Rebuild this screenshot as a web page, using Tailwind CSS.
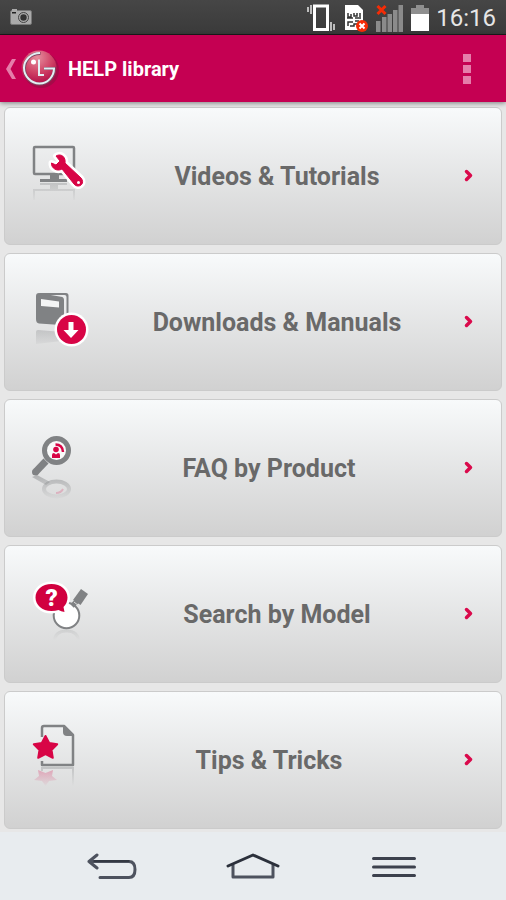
<!DOCTYPE html>
<html lang="en">
<head>
    <meta charset="UTF-8">
    <meta name="viewport" content="width=device-width, initial-scale=1.0">
    <title>HELP library</title>
    <script src="https://cdn.jsdelivr.net/npm/@tailwindcss/browser@4"></script>
</head>
<body class="min-h-screen flex flex-col bg-[#e7e7e7] font-['Roboto',sans-serif]">
    <!-- Status bar -->
    <div class="h-[35px] flex items-center justify-between pl-[10px] pr-[10px] border-b border-[#1c1c1c] bg-linear-to-b from-[#464646] to-[#3a3a3a]">
        <svg class="w-[22px] h-[16px]" viewBox="0 0 22 16" fill="none">
            <rect x="0.5" y="1.5" width="21" height="14" rx="1.5" fill="#aaa" stroke="#777"/>
            <path d="M2 0h5v2H2z" fill="#aaa"/>
            <path d="M2 3h4v1.500H2z" fill="#222"/>
            <circle cx="13.500" cy="8.500" r="5" fill="#aaa" stroke="#444" stroke-width="1"/>
            <circle cx="13.500" cy="8.500" r="3.200" fill="#333"/>
        </svg>
        <div class="flex items-center pt-px">
            <svg class="w-[28px] h-[28px]" viewBox="0 0 28 28" fill="none">
                <rect x="7.500" y="2" width="13" height="23.500" stroke="#fff" stroke-width="3"/>
                <path d="M1 3v5M4 1v9M24 18v9M27 20v6" stroke="#e8e8e8" stroke-width="1.500"/>
            </svg>
            <svg class="w-[24px] h-[28px] ml-[9px]" viewBox="0 0 24 28" fill="none">
                <path d="M1 1h13l5 5v20H1z" fill="#fff"/>
                <path d="M4 9v4h3v-3M10 9v3h3V9M16 9v4M3 14h6M11 14h6M4 22v-4h5M11 17h4M6 22h4v-2h3" stroke="#333" stroke-width="1.500"/>
                <circle cx="18" cy="22" r="6" fill="#f52c06"/>
                <path d="M15.500 19.500l5 5M20.500 19.500l-5 5" stroke="#fff" stroke-width="2"/>
            </svg>
            <svg class="w-[28px] h-[28px] ml-[8px]" viewBox="0 0 28 28" fill="none">
                <path d="M0 17h4.500v11H0zM6 13h4.500v15H6zM11.500 10H16v18h-4.500zM17 6h4.500v22H17zM22.500 1H27v27h-4.500z" fill="#8b8b8b"/>
                <path d="M1.500 2l8 8M9.500 2l-8 8" stroke="#f52c06" stroke-width="3"/>
            </svg>
            <svg class="w-[18px] h-[28px] ml-[7px]" viewBox="0 0 18 28">
                <path d="M5 1h8v3h5v6H0V4h5z" fill="#8f8f8f"/>
                <path d="M0 10h18v17H0z" fill="#fff"/>
            </svg>
            <span class="ml-[7px] text-2xl leading-8 text-[#e6e6e6]">16:16</span>
        </div>
    </div>

    <!-- Action bar -->
    <header class="relative h-[67px] flex items-center justify-between bg-[#c50052] shadow-[0_1px_5px_#0007]">
        <div class="flex items-center">
            <button aria-label="Back" class="flex items-center pl-[6px]">
                <svg class="w-[11px] h-[20px]" viewBox="0 0 11 20">
                    <path d="M6 0h4L4.500 10 10 20H6L0 10z" fill="#e57daa"/>
                </svg>
                <svg class="w-[42px] h-[42px] ml-[2px]" viewBox="0 0 42 42" fill="none">
                    <defs>
                        <radialGradient id="ball" cx="0.45" cy="0.2" r="0.85">
                            <stop offset="0" stop-color="#e58e9e"/>
                            <stop offset="0.5" stop-color="#d04467"/>
                            <stop offset="1" stop-color="#a90040"/>
                        </radialGradient>
                    </defs>
                    <circle cx="22" cy="22" r="18" fill="#a50a48"/>
                    <circle cx="20" cy="20" r="17.500" fill="url(#ball)"/>
                    <path d="M21.500 5.500C12 5 5.500 12 5.500 20.500S12 36 20.500 36 35.500 29 35.500 20.500H25" stroke="#7d4560" stroke-width="3"/>
                    <path d="M21 5C12 5 5 12 5 20s7 15.500 15.500 15.500S35 28 35 20.500H25M20 11.500V27h5" stroke="#e2f0f4" stroke-width="2"/>
                    <circle cx="14.500" cy="14" r="2.500" fill="#fff"/>
                </svg>
            </button>
            <h1 class="ml-[7px] pt-px text-xl font-bold text-white">HELP library</h1>
        </div>
        <button aria-label="More options" class="mr-[35px] flex flex-col gap-[3px]">
            <span class="size-[8px] bg-[#e57daa]"></span>
            <span class="size-[8px] bg-[#e57daa]"></span>
            <span class="size-[8px] bg-[#e57daa]"></span>
        </button>
    </header>

    <!-- Menu -->
    <main class="flex-1 flex flex-col gap-2 px-1 pt-[5px] pb-[3px]">
        <a href="#" class="h-[138px] flex items-center pl-[23px] rounded-md border border-[#cbcbcb] bg-linear-to-b from-[#f8fafb] to-[#d1d1d1]">
            <svg class="w-[70px] h-[80px] shrink-0" viewBox="0 0 70 80" fill="none">
                <defs>
                    <linearGradient id="fade" x1="0" y1="46" x2="0" y2="66" gradientUnits="userSpaceOnUse">
                        <stop offset="0" stop-color="#808284" stop-opacity="0.35"/>
                        <stop offset="1" stop-color="#808284" stop-opacity="0"/>
                    </linearGradient>
                </defs>
                <path d="M6 64V54h40v10" stroke="url(#fade)" stroke-width="2"/>
                <path d="M12 47h27v2h-9v4h-8v-4H12z" fill="url(#fade)"/>
                <rect x="6" y="11" width="40" height="27" rx="1" stroke="#808284" stroke-width="2.500"/>
                <path d="M22 39h9v4h8v3H12v-3h10z" fill="#808284"/>
                <path d="M28 20C33 17 38 21 37 27L53 42C58 48 50 53 46 48L34 33C29 36 23 32 23.500 27L28 29L32 25Z" fill="#fff" stroke="#fff" stroke-width="6" stroke-linejoin="round"/>
                <path d="M28 20C33 17 38 21 37 27L53 42C58 48 50 53 46 48L34 33C29 36 23 32 23.500 27L28 29L32 25Z" fill="#d80546" stroke="#d80546" stroke-linejoin="round"/>
                <circle cx="50.500" cy="46.500" r="1.500" fill="#fff"/>
            </svg>
            <span class="flex-1 pt-0.5 text-center text-[25px] leading-8 font-bold text-[#696969]">Videos &amp; Tutorials</span>
            <svg class="w-[45px] h-[16px] shrink-0" viewBox="0 0 45 16" fill="none">
                <path d="M10.500 3.500l4 4-4 4" stroke="#da0a4c" stroke-width="3.500" stroke-linecap="round" stroke-linejoin="round"/>
            </svg>
        </a>
        <a href="#" class="h-[138px] flex items-center pl-[23px] rounded-md border border-[#cbcbcb] bg-linear-to-b from-[#f8fafb] to-[#d1d1d1]">
            <svg class="w-[70px] h-[80px] shrink-0" viewBox="0 0 70 80" fill="none">
                <path d="M8 50q0-2 2-2l24 2v9L8 62z" fill="url(#fade)"/>
                <path d="M11 11h27q2.500 0 2.500 2.500V36h-2V15q0-2-2-2H13z" fill="#808284"/>
                <path d="M11 11q-3 0-3 3v23q0 4 3 4.500l22 1.500q3 0 3-3V18q0-3-3-3.200z" fill="#808284"/>
                <path d="M13 17l18 2.500v6L13 24z" fill="#f3f4f4"/>
                <circle cx="43.500" cy="47.500" r="17" fill="#fff"/>
                <circle cx="43.500" cy="47.500" r="14.500" fill="#d80546"/>
                <path d="M40.500 40h5v8h5l-7.500 8-7.500-8h5z" fill="#fff"/>
            </svg>
            <span class="flex-1 pt-0.5 text-center text-[25px] leading-8 font-bold text-[#696969]">Downloads &amp; Manuals</span>
            <svg class="w-[45px] h-[16px] shrink-0" viewBox="0 0 45 16" fill="none">
                <path d="M10.500 3.500l4 4-4 4" stroke="#da0a4c" stroke-width="3.500" stroke-linecap="round" stroke-linejoin="round"/>
            </svg>
        </a>
        <a href="#" class="h-[138px] flex items-center pl-[23px] rounded-md border border-[#cbcbcb] bg-linear-to-b from-[#f8fafb] to-[#d1d1d1]">
            <svg class="w-[70px] h-[80px] shrink-0" viewBox="0 0 70 80" fill="none">
                <defs>
                    <linearGradient id="fadelens" x1="0" y1="47" x2="0" y2="70" gradientUnits="userSpaceOnUse">
                        <stop offset="0" stop-color="#808284" stop-opacity="0.5"/>
                        <stop offset="1" stop-color="#808284" stop-opacity="0.05"/>
                    </linearGradient>
                </defs>
                <ellipse cx="28.500" cy="61" rx="12.500" ry="7.500" stroke="url(#fadelens)" stroke-width="4"/>
                <path d="M4 49l5-2 13 7-4 3z" fill="url(#fadelens)"/>
                <path d="M28 65q5 0 7-4" stroke="#d80546" stroke-opacity="0.2" stroke-width="2"/>
                <path d="M18 33L8 43.500" stroke="#808284" stroke-width="7"/>
                <circle cx="7.500" cy="44" r="3.500" fill="#808284"/>
                <circle cx="28.500" cy="22.500" r="12" fill="#f9fafa" stroke="#808284" stroke-width="5"/>
                <circle cx="28" cy="21.500" r="2.800" fill="#d80546"/>
                <path d="M24 30v-3q0-2 2-2l2 1.500 2-1.500q2 0 2 2v3z" fill="#d80546"/>
                <path d="M27.500 16.500q7 0 7.500 7.500" stroke="#d80546" stroke-width="2.500"/>
            </svg>
            <span class="flex-1 pt-0.5 pr-4 text-center text-[25px] leading-8 font-bold text-[#696969]">FAQ by Product</span>
            <svg class="w-[45px] h-[16px] shrink-0" viewBox="0 0 45 16" fill="none">
                <path d="M10.500 3.500l4 4-4 4" stroke="#da0a4c" stroke-width="3.500" stroke-linecap="round" stroke-linejoin="round"/>
            </svg>
        </a>
        <a href="#" class="h-[138px] flex items-center pl-[23px] rounded-md border border-[#cbcbcb] bg-linear-to-b from-[#f8fafb] to-[#d1d1d1]">
            <svg class="w-[70px] h-[80px] shrink-0" viewBox="0 0 70 80" fill="none">
                <path d="M26 68q1-11 12.500-11T51 68" stroke="url(#fade)" stroke-width="3"/>
                <circle cx="38.500" cy="41.500" r="12.800" fill="#fff" stroke="#808284" stroke-width="2"/>
                <path d="M44 32l6-6" stroke="#808284" stroke-width="5"/>
                <path d="M53 15l7 5-7.500 11-7.500-5z" fill="#808284"/>
                <path d="M46 28l5 4" stroke="#dcdcdc" stroke-width="1"/>
                <path d="M23.500 10C14 10 7.500 16 7.500 23.500S14 37 23.500 37q4 0 7-1 2.500 1.500 6 2l-1-5q4-4 4-9.500C39.500 16 33 10 23.500 10z" fill="#fff" stroke="#fff" stroke-width="5" stroke-linejoin="round"/>
                <path d="M23.500 10C14 10 7.500 16 7.500 23.500S14 37 23.500 37q4 0 7-1 2.500 1.500 6 2l-1-5q4-4 4-9.500C39.500 16 33 10 23.500 10z" fill="#d1003f"/>
                <text x="23.500" y="32" text-anchor="middle" font-family="Roboto, sans-serif" font-size="24" font-weight="900" fill="#fff">?</text>
            </svg>
            <span class="flex-1 pt-0.5 text-center text-[25px] leading-8 font-bold text-[#696969]">Search by Model</span>
            <svg class="w-[45px] h-[16px] shrink-0" viewBox="0 0 45 16" fill="none">
                <path d="M10.500 3.500l4 4-4 4" stroke="#da0a4c" stroke-width="3.500" stroke-linecap="round" stroke-linejoin="round"/>
            </svg>
        </a>
        <a href="#" class="h-[138px] flex items-center pl-[23px] rounded-md border border-[#cbcbcb] bg-linear-to-b from-[#f8fafb] to-[#d1d1d1]">
            <svg class="w-[70px] h-[80px] shrink-0" viewBox="0 0 70 80" fill="none">
                <defs>
                    <linearGradient id="fadered" x1="0" y1="48" x2="0" y2="66" gradientUnits="userSpaceOnUse">
                        <stop offset="0" stop-color="#d80546" stop-opacity="0.3"/>
                        <stop offset="1" stop-color="#d80546" stop-opacity="0.02"/>
                    </linearGradient>
                </defs>
                <path d="M14 51v-3h31v20" stroke="url(#fade)" stroke-width="2"/>
                <path d="M10 50l7.500 3 7.500-3-1 6 5 4-8 1-3.500 5-3.500-5-8-1 5-4z" fill="url(#fadered)"/>
                <path d="M14 17V8q0-2 2-2h20l9 9v30H14v-4" stroke="#808284" stroke-width="2.500" stroke-linejoin="round"/>
                <path d="M35 5l11 11h-7q-4 0-4-4z" fill="#808284"/>
                <path d="M17.500 16l3.700 7 8 1.200-5.700 5.800 1.300 7.800-7.300-3.600-7.300 3.600 1.300-7.800-5.700-5.800 8-1.200z" fill="#d80546" stroke="#d80546" stroke-width="2" stroke-linejoin="round"/>
            </svg>
            <span class="flex-1 pt-0.5 pr-4 text-center text-[25px] leading-8 font-bold text-[#696969]">Tips &amp; Tricks</span>
            <svg class="w-[45px] h-[16px] shrink-0" viewBox="0 0 45 16" fill="none">
                <path d="M10.500 3.500l4 4-4 4" stroke="#da0a4c" stroke-width="3.500" stroke-linecap="round" stroke-linejoin="round"/>
            </svg>
        </a>
    </main>

    <!-- Navigation keys -->
    <nav class="h-[68px] grid grid-cols-[1fr_58px_1fr] items-center bg-[#e8ecef]">
        <button aria-label="Back" class="justify-self-center">
            <svg class="w-[50px] h-[26px]" viewBox="0 0 50 26" fill="none" stroke="#4d525e" stroke-width="3" stroke-linecap="round" stroke-linejoin="round">
                <path d="M10 2L2 8.500l8 6.500M2 8.500h40q6 0 6 8t-6 8H13"/>
                <path d="M7 8h35" stroke="#1c2029" stroke-width="1"/>
            </svg>
        </button>
        <button aria-label="Home" class="justify-self-center">
            <svg class="w-[54px] h-[26px]" viewBox="0 0 54 26" fill="none" stroke="#4d525e" stroke-width="3" stroke-linecap="round" stroke-linejoin="round">
                <path d="M7 12v12h40V12"/>
                <path d="M2 13L27 2l25 11" stroke="#2b303b"/>
            </svg>
        </button>
        <button aria-label="Menu" class="justify-self-center">
            <svg class="w-[44px] h-[26px]" viewBox="0 0 44 26" fill="none" stroke="#3c414d" stroke-width="3" stroke-linecap="round">
                <path d="M1.500 5.500h41M1.500 14h41M1.500 22.500h41"/>
            </svg>
        </button>
    </nav>
</body>
</html>
